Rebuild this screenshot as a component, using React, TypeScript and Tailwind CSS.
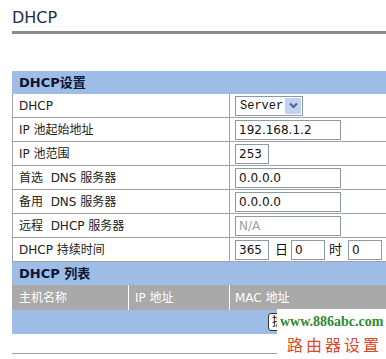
const font = { fontFamily: '"DejaVu Sans", Verdana, "Noto Sans CJK SC", sans-serif' };

const rows: { label: string; kind: string; value?: string }[] = [
  { label: "DHCP", kind: "select", value: "Server" },
  { label: "IP 池起始地址", kind: "text", value: "192.168.1.2" },
  { label: "IP 池范围", kind: "short", value: "253" },
  { label: "首选  DNS 服务器", kind: "text", value: "0.0.0.0" },
  { label: "备用  DNS 服务器", kind: "text", value: "0.0.0.0" },
  { label: "远程  DHCP 服务器", kind: "disabled", value: "N/A" },
  { label: "DHCP 持续时间", kind: "lease" },
];

function Input({ value, w, disabled }: { value: string; w: string; disabled?: boolean }) {
  return (
    <div
      className={`h-[20px] ${w} border border-[#8c9aa8] bg-white px-[3px] text-[12px] leading-[18px] ${
        disabled ? "text-[#a0a0a0]" : "text-[#111]"
      }`}
    >
      {value}
    </div>
  );
}

function Field({ kind, value }: { kind: string; value?: string }) {
  if (kind === "select") {
    return (
      <div className="flex h-[20px] w-[68px] items-center border border-[#8c9aa8] bg-white pl-[4px]">
        <span className="flex-1 text-[12px] text-[#111]" style={{ fontFamily: '"Liberation Mono", monospace' }}>
          {value}
        </span>
        <div className="mr-[1px] flex h-[16px] w-[16px] items-center justify-center bg-[#c1d3f3]">
          <svg width="9" height="7" viewBox="0 0 9 7">
            <path d="M1 1.5 L4.5 5 L8 1.5" fill="none" stroke="#4d6185" strokeWidth="2" />
          </svg>
        </div>
      </div>
    );
  }
  if (kind === "short") return <Input value={value!} w="w-[34px]" />;
  if (kind === "disabled") return <Input value={value!} w="w-[106px]" disabled />;
  if (kind === "lease")
    return (
      <div className="flex items-center text-[13px] text-[#111]">
        <Input value="365" w="w-[34px]" />
        <span className="ml-[6px] mr-[3px]">日</span>
        <Input value="0" w="w-[34px]" />
        <span className="ml-[4px] mr-[6px]">时</span>
        <Input value="0" w="w-[34px]" />
        <span className="ml-[4px]">分</span>
      </div>
    );
  return <Input value={value!} w="w-[106px]" />;
}

export default function App() {
  return (
    <div className="relative h-[359px] w-[386px] overflow-hidden bg-white" style={font}>
      <div className="pl-3 pt-[8px]">
        <h1 className="text-[16px] leading-[20px] text-[#1b3147]">DHCP</h1>
        <div className="mt-[3px] h-[3px] w-[420px] bg-[#8a8a8a]" />

        <div className="mt-[37px] w-[420px]">
          <div className="flex h-[23px] items-center bg-[#9dbde6] pl-[7px] text-[13px] font-bold text-[#0d1530]">
            DHCP设置
          </div>
          {rows.map((r) => (
            <div key={r.label} className="flex h-[24px] items-center border-b border-l border-[#a3a3a3] bg-white">
              <div className="flex h-full w-[217px] items-center whitespace-pre border-r border-[#a3a3a3] pl-[6px] text-[12px] text-[#222]">
                {r.label}
              </div>
              <div className="pl-[5px]">
                <Field kind={r.kind} value={r.value} />
              </div>
            </div>
          ))}
          <div className="flex h-[23px] items-center bg-[#9dbde6] pl-[7px] text-[13px] font-bold text-[#0d1530]">
            DHCP 列表
          </div>
          <div className="flex h-[25px] bg-[#a9a9a9] text-[12px] text-white">
            <div className="flex w-[117px] items-center border-r border-white pl-[7px]">主机名称</div>
            <div className="flex w-[101px] items-center border-r border-white pl-[6px]">IP 地址</div>
            <div className="flex items-center pl-[5px]">MAC 地址</div>
          </div>
          <div className="flex h-[24px] items-center bg-[#9dbde6]">
            <button className="ml-[256px] h-[18px] rounded-[3px] border border-[#333] bg-white px-[3px] text-[12px] leading-[14px] text-black">
              提交
            </button>
          </div>
          <div className="mt-[19px] h-px bg-[#a3a3a3]" />
        </div>
      </div>

      <div className="absolute left-[277px] top-[309px] h-[50px] w-[109px] bg-white">
        <div
          className="pl-[3px] pt-[4px] text-[14px] font-bold leading-[18px] text-[#2f8a2f]"
          style={{ fontFamily: '"Liberation Serif", serif' }}
        >
          www.886abc.com
        </div>
        <div
          className="pl-[10px] pt-[2px] text-[16px] leading-[22px] tracking-[3px] text-[#e0482a]"
          style={{ fontFamily: '"Noto Sans CJK SC", sans-serif' }}
        >
          路由器设置
        </div>
      </div>
    </div>
  );
}
